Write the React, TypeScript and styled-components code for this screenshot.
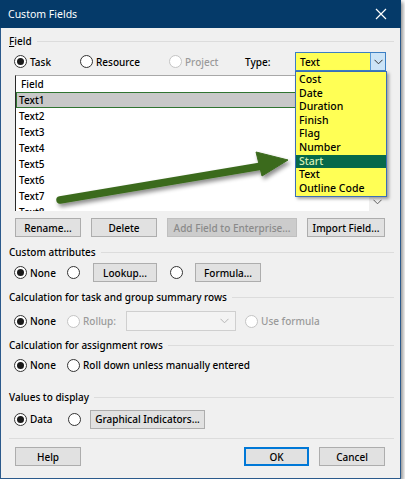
import React from 'react'
import styled, { createGlobalStyle, css } from 'styled-components'

const FONT = `"Noto Sans", "Liberation Sans", sans-serif`

const GlobalStyle = createGlobalStyle`
  html, body {
    margin: 0;
    background: #ffffff;
  }
  body {
    font-family: ${FONT};
    font-size: 10px;
    font-weight: 500;
    color: #000;
  }
`

const fields = ['Text1', 'Text2', 'Text3', 'Text4', 'Text5', 'Text6', 'Text7', 'Text8']
const types = ['Cost', 'Date', 'Duration', 'Finish', 'Flag', 'Number', 'Start', 'Text', 'Outline Code']

interface RadioProps {
  label?: React.ReactNode
  checked?: boolean
  disabled?: boolean
  width?: number
}

function Radio({ label, checked, disabled, width }: RadioProps) {
  return (
    <RadioLabel $disabled={disabled} $width={width}>
      <RadioCircle $checked={checked} $disabled={disabled} />
      {label && <span>{label}</span>}
    </RadioLabel>
  )
}

function Chevron({ color = '#555' }: { color?: string }) {
  return (
    <svg width="9" height="6" viewBox="0 0 9 6">
      <path d="M0.5 0.8 L4.5 4.8 L8.5 0.8" fill="none" stroke={color} strokeWidth="1" />
    </svg>
  )
}

export default function App() {
  return (
    <>
      <GlobalStyle />
      <Window>
        <TitleBar>
          <span>Custom Fields</span>
          <svg width="12" height="12" viewBox="0 0 12 12">
            <path d="M1 1 L11 11 M11 1 L1 11" stroke="#fff" strokeWidth="1.2" />
          </svg>
        </TitleBar>

        <Body>
          <GroupTitle>
            <span>
              <u>F</u>ield
            </span>
          </GroupTitle>

          <Row $top={3} $height={19}>
            <Radio label="Task" checked width={66} />
            <Radio label="Resource" width={89} />
            <Radio label="Project" disabled width={76} />
            <TypeLabel>Type:</TypeLabel>
            <TypeCombo>
              <span>Text</span>
              <ComboButton>
                <Chevron color="#333" />
              </ComboButton>
            </TypeCombo>
          </Row>

          <FieldList>
            <ListRows>
              <ListHeader>Field</ListHeader>
              {fields.map((f, i) => (
                <ListRow key={f} $selected={i === 0}>
                  {f}
                </ListRow>
              ))}
            </ListRows>
            <ScrollBar>
              <Chevron color="#606060" />
            </ScrollBar>
          </FieldList>

          <ButtonRow $top={7}>
            <Button $width={66}>Rename...</Button>
            <Button $width={66}>Delete</Button>
            <Button $width={130} disabled>
              Add Field to Enterprise...
            </Button>
            <Button $width={78}>Import Field...</Button>
          </ButtonRow>

          <GroupTitle $top={7}>
            <span>Custom attributes</span>
          </GroupTitle>
          <Row $top={3} $height={19}>
            <Radio label="None" checked width={53} />
            <Radio width={26} />
            <Button $width={64}>Lookup...</Button>
            <Spacer $width={13} />
            <Radio width={25} />
            <Button $width={66}>Formula...</Button>
          </Row>

          <GroupTitle $top={7}>
            <span>Calculation for task and group summary rows</span>
          </GroupTitle>
          <Row $top={6} $height={20}>
            <Radio label="None" checked width={53} />
            <Radio label="Rollup:" disabled width={59} />
            <RollupCombo>
              <Chevron color="#b5b5b5" />
            </RollupCombo>
            <Spacer $width={9} />
            <Radio label="Use formula" disabled />
          </Row>

          <GroupTitle $top={6}>
            <span>Calculation for assignment rows</span>
          </GroupTitle>
          <Row $top={3} $height={18}>
            <Radio label="None" checked width={53} />
            <Radio label="Roll down unless manually entered" />
          </Row>

          <GroupTitle $top={15}>
            <span>Values to display</span>
          </GroupTitle>
          <Row $top={5} $height={18}>
            <Radio label="Data" checked width={54} />
            <Radio width={22} />
            <Button $width={115}>Graphical Indicators...</Button>
          </Row>

          <Separator />

          <Footer>
            <Button $width={66}>Help</Button>
            <FooterRight>
              <Button $width={65} $default>
                OK
              </Button>
              <Button $width={66}>Cancel</Button>
            </FooterRight>
          </Footer>
        </Body>

        <TypeMenu>
          {types.map((t) => (
            <MenuItem key={t} $active={t === 'Start'}>
              {t}
            </MenuItem>
          ))}
        </TypeMenu>

        <Pointer width="401" height="479" viewBox="0 0 401 479">
          <defs>
            <filter id="arrowShadow" x="-10%" y="-30%" width="120%" height="160%">
              <feDropShadow dx="2" dy="3" stdDeviation="2" floodColor="#000" floodOpacity="0.45" />
            </filter>
          </defs>
          <g filter="url(#arrowShadow)" fill="#3b6a1d" stroke="#3b6a1d">
            <line x1="60" y1="200" x2="262" y2="166" strokeWidth="7.5" strokeLinecap="round" />
            <polygon points="256,152 288,160 262,176" strokeWidth="1" strokeLinejoin="round" />
          </g>
        </Pointer>
      </Window>
    </>
  )
}

const Window = styled.div`
  position: relative;
  width: 401px;
  height: 479px;
  box-sizing: border-box;
  background: #f0f0f0;
  border: 1px solid #2b5a8c;
  border-top: none;
  box-shadow: 2px 2px 4px rgba(0, 0, 0, 0.45);
  display: flex;
  flex-direction: column;
`

const TitleBar = styled.div`
  height: 28px;
  margin: 0 -1px;
  padding: 0 14px 0 8px;
  background: #053a69;
  color: #fff;
  font-size: 10.5px;
  font-weight: 400;
  display: flex;
  align-items: center;
  justify-content: space-between;
  flex-shrink: 0;
`

const Body = styled.div`
  padding: 5px 6px 0 8px;
  display: flex;
  flex-direction: column;
`

const GroupTitle = styled.div<{ $top?: number }>`
  height: 16px;
  margin-top: ${({ $top = 0 }) => $top}px;
  display: flex;
  align-items: center;
  gap: 5px;
  white-space: nowrap;

  &::after {
    content: '';
    flex: 1;
    height: 1px;
    background: #dcdcdc;
  }
`

const Row = styled.div<{ $top: number; $height: number }>`
  height: ${({ $height }) => $height}px;
  margin-top: ${({ $top }) => $top}px;
  padding-left: 5px;
  display: flex;
  align-items: center;
  white-space: nowrap;
`

const Spacer = styled.div<{ $width: number }>`
  width: ${({ $width }) => $width}px;
  flex-shrink: 0;
`

const RadioLabel = styled.label<{ $disabled?: boolean; $width?: number }>`
  display: flex;
  align-items: center;
  gap: 3px;
  flex-shrink: 0;
  width: ${({ $width }) => ($width ? `${$width}px` : 'auto')};
  color: ${({ $disabled }) => ($disabled ? '#9a9a9a' : '#000')};
`

const RadioCircle = styled.span<{ $checked?: boolean; $disabled?: boolean }>`
  width: 13px;
  height: 13px;
  box-sizing: border-box;
  border-radius: 50%;
  border: 1px solid ${({ $disabled }) => ($disabled ? '#c4c4c4' : '#333')};
  background: #fff;
  display: flex;
  align-items: center;
  justify-content: center;
  flex-shrink: 0;

  ${({ $checked }) =>
    $checked &&
    css`
      &::after {
        content: '';
        width: 7px;
        height: 7px;
        border-radius: 50%;
        background: #1a1a1a;
      }
    `}
`

const TypeLabel = styled.span`
  width: 50px;
  flex-shrink: 0;
`

const TypeCombo = styled.div`
  width: 91px;
  height: 19px;
  box-sizing: border-box;
  border: 1px solid #3c7fc4;
  background: #ffff55;
  display: flex;
  align-items: center;
  justify-content: space-between;
  padding-left: 4px;
`

const ComboButton = styled.div`
  width: 15px;
  height: 17px;
  box-sizing: border-box;
  border-left: 1px solid #5a9ad8;
  background: #cce4f7;
  display: flex;
  align-items: center;
  justify-content: center;
`

const RollupCombo = styled.div`
  width: 110px;
  height: 20px;
  box-sizing: border-box;
  border: 1px solid #cfcfcf;
  background: #f3f3f3;
  display: flex;
  align-items: center;
  justify-content: flex-end;
  padding-right: 6px;
  flex-shrink: 0;
`

const FieldList = styled.div`
  margin: 4px 0 0 6px;
  width: 371px;
  height: 136px;
  box-sizing: border-box;
  border-top: 1px solid #a8a8a8;
  border-left: 1px solid #2a2a2a;
  background: #fff;
  display: flex;
  overflow: hidden;
`

const ListRows = styled.div`
  flex: 1;
  display: flex;
  flex-direction: column;
`

const ListHeader = styled.div`
  height: 16px;
  flex-shrink: 0;
  padding-left: 5px;
  display: flex;
  align-items: center;
`

const ListRow = styled.div<{ $selected?: boolean }>`
  height: 16px;
  flex-shrink: 0;
  box-sizing: border-box;
  padding-left: 2px;
  display: flex;
  align-items: center;
  border: 1px solid transparent;

  ${({ $selected }) =>
    $selected &&
    css`
      background: #c8c8c8;
      border-color: #2f7430;
    `}
`

const ScrollBar = styled.div`
  width: 17px;
  flex-shrink: 0;
  background: #f0f0f0;
  display: flex;
  align-items: flex-end;
  justify-content: center;
  padding-bottom: 6px;
  box-sizing: border-box;
`

const ButtonRow = styled.div<{ $top: number }>`
  margin: ${({ $top }) => $top}px 0 0 6px;
  display: flex;
  gap: 10px;
`

const Button = styled.button<{ $width: number; $default?: boolean }>`
  width: ${({ $width }) => $width}px;
  height: 19px;
  box-sizing: border-box;
  padding: 0;
  flex-shrink: 0;
  font-family: ${FONT};
  font-size: 10px;
  font-weight: 500;
  color: #000;
  background: #e1e1e1;
  border: 1px solid #adadad;
  white-space: nowrap;

  &:disabled {
    background: #cccccc;
    border-color: #bfbfbf;
    color: #8a8a8a;
  }

  ${({ $default }) =>
    $default &&
    css`
      border-color: #0078d7;
      box-shadow: inset 0 0 0 1px #0078d7;
    `}
`

const Separator = styled.div`
  height: 1px;
  margin-top: 10px;
  background: #dcdcdc;
`

const Footer = styled.div`
  margin: 8px 0 0 6px;
  width: 370px;
  display: flex;
  justify-content: space-between;
`

const FooterRight = styled.div`
  display: flex;
  gap: 10px;
`

const TypeMenu = styled.div`
  position: absolute;
  left: 294px;
  top: 71px;
  width: 92px;
  height: 126px;
  box-sizing: border-box;
  padding-top: 1px;
  background: #ffff55;
  border: 1px solid #3b6fb6;
  box-shadow: 2px 2px 3px rgba(0, 0, 0, 0.35);
`

const MenuItem = styled.div<{ $active?: boolean }>`
  height: 13.6px;
  line-height: 13.6px;
  padding-left: 3px;
  font-size: 10.5px;
  background: ${({ $active }) => ($active ? '#07694a' : 'transparent')};
  color: ${({ $active }) => ($active ? '#d8f0b4' : '#000')};
`

const Pointer = styled.svg`
  position: absolute;
  left: -1px;
  top: 0;
  pointer-events: none;
  overflow: visible;
`
